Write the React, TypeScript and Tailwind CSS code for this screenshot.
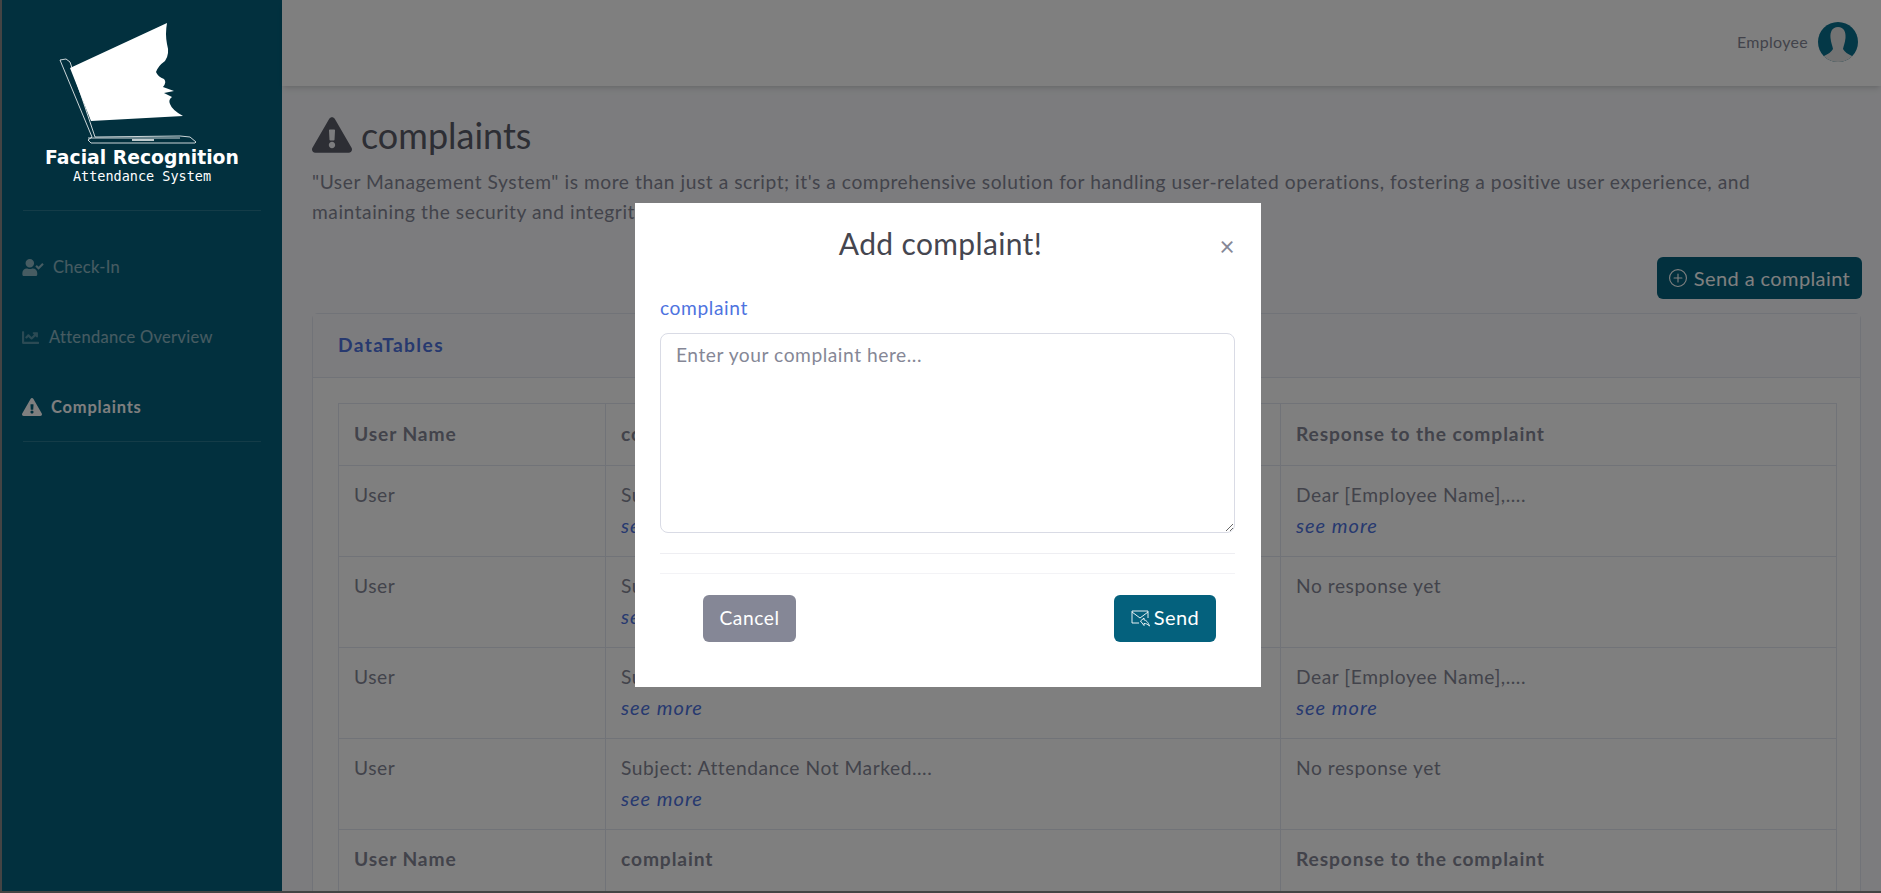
import { FaExclamationTriangle, FaUserCheck, FaChartLine } from 'react-icons/fa';
import { BsPlusCircle } from 'react-icons/bs';

const rows = [
  { name: 'User', subject: 'Subject: Attendance Not Marked....', response: 'Dear [Employee Name],....', more: true },
  { name: 'User', subject: 'Subject: Attendance Not Marked....', response: 'No response yet', more: false },
  { name: 'User', subject: 'Subject: Attendance Not Marked....', response: 'Dear [Employee Name],....', more: true },
  { name: 'User', subject: 'Subject: Attendance Not Marked....', response: 'No response yet', more: false },
];

function Logo() {
  return (
    <svg width="280" height="148" viewBox="2 0 280 148" className="block">
      <path
        d="M70 68 L167 23 Q165 34 167 44 Q170 54 165 61 Q158 66 156 72 Q158 77 164 79 Q167 82 163 87 L174 91 L164 93 L172 97 Q168 100 170 104 Q172 110 183 116 L91 121 Z"
        fill="#ffffff"
      />
      <path
        d="M60 60 L66 59 L70 62 L95 137 L180 136 L190 137 L196 142 L195 143 L91 143 L88 140 L92 137 L60 60 Z M88 138 L180 138"
        fill="none"
        stroke="#ffffff"
        strokeWidth="0.8"
      />
      <path d="M132 140 L154 140" stroke="#ffffff" strokeWidth="1.5" />
    </svg>
  );
}

function Avatar() {
  return (
    <svg width="40" height="40" viewBox="0 0 40 40">
      <defs>
        <clipPath id="avatar-clip">
          <circle cx="20" cy="20" r="20" />
        </clipPath>
      </defs>
      <g clipPath="url(#avatar-clip)">
        <rect width="40" height="40" fill="#08708e" />
        <path
          d="M20 5 C14 5 12 10 12.5 16 C13 21 14.5 24 15 27 C13.5 30 10 32 6 34 L6 40 L34 40 L34 34 C30 32 26.5 30 25 27 C25.5 24 27 21 27.5 16 C28 10 26 5 20 5 Z"
          fill="#e6e6e6"
        />
      </g>
    </svg>
  );
}

function SendIcon() {
  return (
    <svg width="20" height="18" viewBox="0 0 20 18" fill="none" stroke="#ffffff" strokeWidth="0.9">
      <path d="M8 13 H1 V1 H17 V8" />
      <path d="M1 2 L9 8 L17 2" />
      <path d="M9.5 11 L13 8 L13 10 C15 10 17 12 18.5 16 C16.5 14 15 13.5 13 13.5 L13 15.5 Z" />
    </svg>
  );
}

function NavItem({ icon, label, active, gap }: { icon: React.ReactNode; label: string; active?: boolean; gap: string }) {
  return (
    <div className={`flex h-[70px] items-center pl-[20px] ${gap} ${active ? 'font-bold tracking-[0.8px] text-white' : 'tracking-[0.3px] text-white/55'}`}>
      {icon}
      <span className="text-[16.5px]">{label}</span>
    </div>
  );
}

export default function App() {
  return (
    <div className="relative flex h-[893px] w-[1881px] overflow-hidden border-b-2 border-l-2 border-[#444444] bg-[#f8f9fc] font-['Lato','Noto_Sans',sans-serif] text-[19.2px] tracking-[0.55px] text-[#858796]">
      {/* Sidebar */}
      <aside className="w-[280px] shrink-0 bg-[#04617d]">
        <div className="relative z-20 h-[196px]">
          <Logo />
          <div className="text-center font-['DejaVu_Sans',sans-serif] text-[18.8px] leading-[20px] font-bold tracking-normal text-white">
            Facial Recognition
          </div>
          <div className="text-center font-['DejaVu_Sans_Mono',monospace] text-[13.5px] leading-[17px] tracking-normal text-white">
            Attendance System
          </div>
        </div>
        <div className="mx-[21px] mt-[14px] border-t border-white/15" />
        <div className="pt-[21px]">
          <NavItem gap="gap-[9px]" icon={<FaUserCheck className="h-[17px] w-[22px]" />} label="Check-In" />
          <NavItem gap="gap-[10px]" icon={<FaChartLine className="h-[17px] w-[17px] opacity-60" />} label="Attendance Overview" />
          <NavItem gap="gap-[9px]" active icon={<FaExclamationTriangle className="h-[18px] w-[20px]" />} label="Complaints" />
        </div>
        <div className="mx-[21px] -mt-px border-t border-white/15" />
      </aside>

      {/* Main */}
      <div className="min-w-0 flex-1">
        <header className="flex h-[86px] items-center justify-end gap-[10px] bg-white pr-[23px] pb-[2px] tracking-[0.3px] shadow-md">
          <span className="text-[16px]">Employee</span>
          <Avatar />
        </header>

        <main className="pt-[29px] pr-[20px] pl-[30px]">
          <h1 className="flex h-[40px] items-center gap-[9px] text-[36px] tracking-normal text-[#5a5c69]">
            <FaExclamationTriangle className="h-[36px] w-[40px]" />
            complaints
          </h1>
          <p className="mt-[12px] w-[1480px] leading-[29.5px]">
            "User Management System" is more than just a script; it's a comprehensive solution for handling user-related
            operations, fostering a positive user experience, and maintaining the security and integrity of your data.
          </p>

          <div className="-mr-px mt-[31px] flex justify-end">
            <button className="flex h-[42px] w-[205px] items-center justify-center gap-[7px] rounded-[6px] bg-[#04617d] text-[20px] tracking-[0.4px] text-white">
              <BsPlusCircle className="h-[18px] w-[18px]" />
              Send a complaint
            </button>
          </div>

          <section className="mt-[14px] rounded-[6px] border border-[#e3e6f0] bg-white">
            <div className="flex h-[64px] items-center border-b border-[#e3e6f0] bg-[#f8f9fc] pl-[25px] font-bold tracking-[1.4px] text-[#4e73df]">
              DataTables
            </div>
            <div className="px-[25px] pt-[25px]">
              <table className="w-[1499px] table-fixed border-collapse">
                <colgroup>
                  <col className="w-[267px]" />
                  <col className="w-[675px]" />
                  <col />
                </colgroup>
                <thead>
                  <tr className="h-[62px] font-bold tracking-[0.9px]">
                    <th className="border border-[#e3e6f0] pl-[15px] text-left">User Name</th>
                    <th className="border border-[#e3e6f0] pl-[15px] text-left">complaint</th>
                    <th className="border border-[#e3e6f0] pl-[15px] text-left">Response to the complaint</th>
                  </tr>
                </thead>
                <tbody>
                  {rows.map((row, i) => (
                    <tr key={i} className="h-[91px] align-top leading-[30px]">
                      <td className="border border-[#e3e6f0] px-[15px] pt-[14px] pb-[16px]">{row.name}</td>
                      <td className="border border-[#e3e6f0] px-[15px] pt-[14px] pb-[16px]">
                        {row.subject}
                        <a className="block h-[30px] text-[20px] tracking-[1px] text-[#4e73df] italic">see more</a>
                      </td>
                      <td className="border border-[#e3e6f0] px-[15px] pt-[14px] pb-[16px]">
                        {row.response}
                        {row.more && (
                          <a className="block h-[30px] text-[20px] tracking-[1px] text-[#4e73df] italic">see more</a>
                        )}
                      </td>
                    </tr>
                  ))}
                  <tr className="h-[72px] align-top leading-[58px] font-bold tracking-[0.9px]">
                    <td className="border border-[#e3e6f0] pl-[15px]">User Name</td>
                    <td className="border border-[#e3e6f0] pl-[15px]">complaint</td>
                    <td className="border border-[#e3e6f0] pl-[15px]">Response to the complaint</td>
                  </tr>
                </tbody>
              </table>
            </div>
          </section>
        </main>
      </div>

      {/* Modal backdrop and dialog */}
      <div className="absolute inset-0 z-10 bg-black/50" />
      <div className="absolute top-[203px] left-[633px] z-30 h-[484px] w-[626px] bg-white pr-[26px] pl-[25px]">
        <div className="relative pt-[22px] pr-[14px] text-center text-[30px] leading-[36px] tracking-[0.35px] text-[#45464f]">
          Add complaint!
          <span className="absolute top-[27px] right-[0px] text-[26px] leading-[32px] text-[#858796]">×</span>
        </div>
        <label className="mt-[33px] block leading-[28px] tracking-[0.6px] text-[#4e73df]">complaint</label>
        <textarea
          className="mt-[11px] block h-[200px] w-full rounded-[8px] border border-[#d9dbe5] px-[15px] py-[7px] leading-[28px] text-[#6e707e] outline-none placeholder:text-[#858796]"
          placeholder="Enter your complaint here..."
        />
        <div className="mt-[20px] border-t border-[#eeeef2]" />
        <div className="mt-[19px] border-t border-[#f3f3f6]" />
        <div className="mt-[21px] flex justify-between pr-[19px] pl-[43px]">
          <button className="h-[47px] w-[93px] rounded-[6px] bg-[#858796] pb-[1px] text-white">Cancel</button>
          <button className="flex h-[47px] w-[102px] items-center justify-center gap-[3px] rounded-[6px] bg-[#04617d] text-[20px] tracking-[0.4px] text-white">
            <SendIcon />
            <span className="pb-[3px]">Send</span>
          </button>
        </div>
      </div>
    </div>
  );
}
